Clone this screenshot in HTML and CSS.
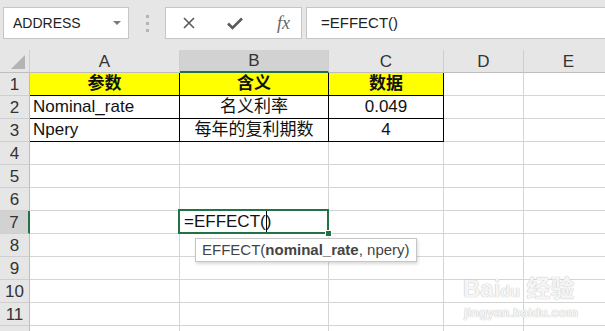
FILE: index.html
```html
<!DOCTYPE html>
<html lang="zh">
<head>
    <meta charset="UTF-8">
    <title>EFFECT</title>
    <link rel="stylesheet" href="styles.css">
</head>
<body>
    <div class="toolbar">
        <div class="name-box">
            <span>ADDRESS</span>
            <span class="drop"></span>
        </div>
        <div class="grip"><i></i><i></i><i></i></div>
        <div class="fn-box">
            <svg width="16" height="16" viewBox="0 0 16 16"><path d="M3 3 L13 13 M13 3 L3 13" stroke="#5a5a5a" stroke-width="1.6" fill="none"/></svg>
            <svg width="18" height="16" viewBox="0 0 18 16"><path d="M2 8.5 L6.5 13 L16 3.5" stroke="#5a5a5a" stroke-width="2.6" fill="none"/></svg>
            <span class="fx">fx</span>
        </div>
        <div class="formula-box">=EFFECT()</div>
    </div>

    <div class="sheet">
        <div class="hd corner"><span class="tri"></span></div>
        <div class="hd">A</div>
        <div class="hd sel-col">B</div>
        <div class="hd">C</div>
        <div class="hd">D</div>
        <div class="hd">E</div>

        <div class="hd rn">1</div>
        <div class="c t head">参数</div>
        <div class="c t head">含义</div>
        <div class="c t head">数据</div>
        <div class="c"></div>
        <div class="c"></div>

        <div class="hd rn">2</div>
        <div class="c t left">Nominal_rate</div>
        <div class="c t">名义利率</div>
        <div class="c t">0.049</div>
        <div class="c"></div>
        <div class="c"></div>

        <div class="hd rn">3</div>
        <div class="c t left">Npery</div>
        <div class="c t">每年的复利期数</div>
        <div class="c t">4</div>
        <div class="c"></div>
        <div class="c"></div>

        <div class="hd rn">4</div>
        <div class="c"></div><div class="c"></div><div class="c"></div><div class="c"></div><div class="c"></div>
        <div class="hd rn">5</div>
        <div class="c"></div><div class="c"></div><div class="c"></div><div class="c"></div><div class="c"></div>
        <div class="hd rn">6</div>
        <div class="c"></div><div class="c"></div><div class="c"></div><div class="c"></div><div class="c"></div>

        <div class="hd rn sel-row">7</div>
        <div class="c"></div>
        <div class="c left active">=EFFECT(<span class="caret"></span>)
            <div class="tip">EFFECT(<b>nominal_rate</b>, npery)</div>
        </div>
        <div class="c"></div><div class="c"></div><div class="c"></div>

        <div class="hd rn">8</div>
        <div class="c"></div><div class="c"></div><div class="c"></div><div class="c"></div><div class="c"></div>
        <div class="hd rn">9</div>
        <div class="c"></div><div class="c"></div><div class="c"></div><div class="c"></div><div class="c"></div>
        <div class="hd rn">10</div>
        <div class="c"></div><div class="c"></div><div class="c"></div><div class="c"></div><div class="c"></div>
        <div class="hd rn">11</div>
        <div class="c"></div><div class="c"></div><div class="c"></div><div class="c"></div><div class="c"></div>
        <div class="hd rn"></div>
        <div class="c"></div><div class="c"></div><div class="c"></div><div class="c"></div><div class="c"></div>
    </div>

    <div class="watermark">
        <div class="wm-logo">Bai<span class="paw">du</span> 经验</div>
        <div class="wm-url">jingyan.baidu.com</div>
    </div>
</body>
</html>
```

FILE: styles.css
```css
/* General */
body {
    margin: 0;
    width: 605px;
    height: 331px;
    overflow: hidden;
    background: #e6e6e6;
    font-family: 'Liberation Sans', 'Noto Sans CJK SC', sans-serif;
    position: relative;
}

/* Formula bar */
.toolbar {
    height: 50px;
    display: flex;
    align-items: flex-start;
    padding-top: 7px;
    box-sizing: border-box;
}

.name-box {
    margin-left: 3px;
    width: 126px;
    height: 32px;
    box-sizing: border-box;
    background: white;
    border: 1px solid #c6c6c6;
    display: flex;
    align-items: center;
    justify-content: space-between;
    padding: 0 7px 0 9px;
    font-size: 14px;
    color: #222;
}

.drop {
    width: 0;
    height: 0;
    border-left: 4px solid transparent;
    border-right: 4px solid transparent;
    border-top: 4px solid #7a7a7a;
}

.grip {
    width: 36px;
    height: 32px;
    display: flex;
    flex-direction: column;
    align-items: center;
    justify-content: center;
    gap: 4px;
}

.grip i {
    width: 3px;
    height: 3px;
    background: #b4b4b4;
}

.fn-box {
    width: 137px;
    height: 32px;
    box-sizing: border-box;
    background: white;
    border: 1px solid #c6c6c6;
    display: flex;
    align-items: center;
    padding-left: 15px;
    gap: 29px;
}

.fx {
    font-family: 'Liberation Serif', serif;
    font-style: italic;
    font-size: 18px;
    color: #666;
    margin-left: 4px;
}

.formula-box {
    margin-left: 4px;
    flex: 1;
    height: 32px;
    box-sizing: border-box;
    background: white;
    border: 1px solid #c6c6c6;
    border-right: none;
    padding-left: 14px;
    font-size: 15px;
    line-height: 30px;
    color: #222;
}

/* Sheet grid */
.sheet {
    display: grid;
    grid-template-columns: 30px 150px 149px 115px 80px 90px;
    grid-auto-rows: 23px;
    background: white;
}

.hd {
    background: #e6e6e6;
    border-right: 1px solid #cfcfcf;
    border-bottom: 1px solid #bdbdbd;
    box-sizing: border-box;
    font-size: 17px;
    color: #333;
    text-align: center;
    line-height: 23px;
}

.rn {
    border-right: 1px solid #bdbdbd;
    border-bottom: 1px solid #cfcfcf;
}

.corner {
    position: relative;
}

.tri {
    position: absolute;
    right: 4px;
    bottom: 3px;
    width: 0;
    height: 0;
    border-left: 14px solid transparent;
    border-bottom: 14px solid #b4b4b4;
}

.sel-col {
    background: #d2d2d2;
    border-bottom: 2px solid #217346;
    line-height: 22px;
}

.sel-row {
    background: #d2d2d2;
    border-right: 2px solid #217346;
}

.c {
    border-right: 1px solid #d4d4d4;
    border-bottom: 1px solid #d4d4d4;
    box-sizing: border-box;
    font-size: 17px;
    line-height: 22px;
    color: #111;
    text-align: center;
    white-space: nowrap;
}

.t {
    border-right-color: #000;
    border-bottom-color: #000;
}

.head {
    background: #ffff00;
    font-weight: bold;
}

.left {
    text-align: left;
    padding-left: 3px;
}

/* Active cell */
.active {
    position: relative;
    padding-left: 4px;
}

.active::after {
    content: "";
    position: absolute;
    left: -2px;
    top: -2px;
    right: -1px;
    bottom: -1px;
    border: 2px solid #217346;
}

.active::before {
    content: "";
    position: absolute;
    right: -4px;
    bottom: -4px;
    width: 5px;
    height: 5px;
    background: #217346;
    border: 1px solid white;
    z-index: 2;
}

.caret {
    display: inline-block;
    width: 1px;
    height: 22px;
    background: #000;
    vertical-align: top;
    margin-right: -1px;
}

.tip {
    position: absolute;
    left: 15px;
    top: 27px;
    z-index: 3;
    background: white;
    border: 1px solid #c6c6c6;
    box-shadow: 1px 2px 3px rgba(0, 0, 0, 0.15);
    padding: 0 6px;
    font-size: 15px;
    line-height: 22px;
    color: #444;
}

/* Watermark */
.watermark {
    position: absolute;
    left: 463px;
    top: 276px;
    color: rgba(255, 255, 255, 0.85);
    text-shadow: 0 0 1px #c4c4c4, 0 0 1px #c4c4c4;
    font-weight: bold;
}

.wm-logo {
    font-size: 24px;
    line-height: 26px;
}

.paw {
    font-size: 16px;
}

.wm-url {
    font-size: 13px;
    line-height: 16px;
    margin-left: 1px;
}
```
